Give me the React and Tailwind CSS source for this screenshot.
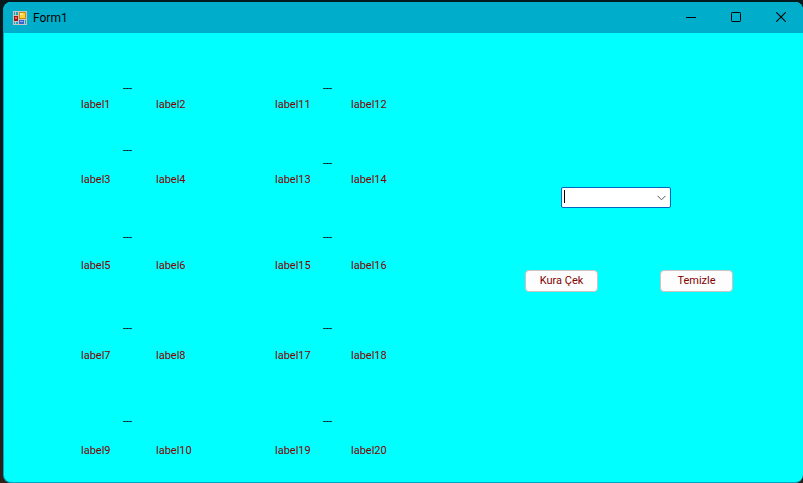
import React from "react";

const rows = [
  { space: "pt-12", left: ["label1", "label2"], right: ["label11", "label12"], leftGap: "gap-0", rightGap: "gap-0" },
  { space: "pt-[30px]", left: ["label3", "label4"], right: ["label13", "label14"], leftGap: "gap-[13px]", rightGap: "gap-0" },
  { space: "pt-[42px]", left: ["label5", "label6"], right: ["label15", "label16"], leftGap: "gap-3", rightGap: "gap-3" },
  { space: "pt-[47px]", left: ["label7", "label8"], right: ["label17", "label18"], leftGap: "gap-[11px]", rightGap: "gap-[11px]" },
  { space: "pt-[50px]", left: ["label9", "label10"], right: ["label19", "label20"], leftGap: "gap-[13px]", rightGap: "gap-[13px]" },
];

function Pair({ names, gap, width, inset }) {
  return (
    <div className={`flex flex-col ${gap} ${width}`}>
      <span className={`${inset} text-black`}>---</span>
      <div className="flex justify-between">
        <span>{names[0]}</span>
        <span className="w-[35px]">{names[1]}</span>
      </div>
    </div>
  );
}

function FormIcon() {
  return (
    <svg width="14" height="14" viewBox="0 0 14 14" shapeRendering="crispEdges" aria-hidden="true">
      <rect width="14" height="14" fill="#c9c4bd" />
      <rect x="1" y="1" width="1" height="3" fill="#18a4bd" />
      <rect x="3" y="1" width="2" height="3" fill="#18a4bd" />
      <rect x="1" y="5" width="4" height="5" fill="#a31515" />
      <rect x="2" y="6" width="2" height="2" fill="#e8695c" />
      <rect x="6" y="1" width="7" height="7" fill="#c88a10" />
      <rect x="7" y="2" width="5" height="5" fill="#ffd23c" />
      <rect x="7" y="2" width="3" height="2" fill="#ffe98a" />
      <rect x="1" y="11" width="1" height="2" fill="#18a4bd" />
      <rect x="3" y="11" width="2" height="2" fill="#18a4bd" />
      <rect x="6" y="9" width="5" height="4" fill="#3565d0" />
      <rect x="7" y="10" width="3" height="1" fill="#8db4ff" />
      <rect x="12" y="9" width="1" height="4" fill="#18a4bd" />
    </svg>
  );
}

const captionClass = "flex h-full w-[45px] items-center justify-center pb-px";

function TitleBar() {
  return (
    <header className="flex h-[31px] items-center bg-[#00aecb] pl-[9px] text-black">
      <FormIcon />
      <h1 className="ml-[6px] flex-1 text-[12px] leading-4">Form1</h1>
      <button type="button" aria-label="Minimize" className={captionClass}>
        <svg width="10" height="10" viewBox="0 0 10 10" shapeRendering="crispEdges"><path d="M0 5.5h10" stroke="currentColor" /></svg>
      </button>
      <button type="button" aria-label="Maximize" className={captionClass}>
        <svg width="10" height="10" viewBox="0 0 10 10"><rect x=".5" y=".5" width="9" height="9" rx=".8" fill="none" stroke="currentColor" /></svg>
      </button>
      <button type="button" aria-label="Close" className={captionClass}>
        <svg width="10" height="10" viewBox="0 0 10 10"><path d="M.3.3l9.4 9.4M9.7.3L.3 9.7" stroke="currentColor" strokeWidth="1.1" /></svg>
      </button>
    </header>
  );
}

const buttonClass = "h-[22px] w-[73px] rounded-[4px] border border-[#d0c0c0] bg-[#fdfdfd] leading-4";

export default function App() {
  return (
    <div className="min-h-screen bg-linear-to-b from-[#041a1e] via-[#15191b] to-[#30201a] pt-[2px] pl-[3px] font-['Roboto',sans-serif] text-[11px] leading-4 text-[#800000]">
      <div className="flex min-h-[481px] flex-col overflow-hidden rounded-lg border-b border-l border-[#00a5c0] bg-[#00ffff]">
        <TitleBar />
        <main className="flex flex-1 justify-between pr-[70px] pl-[77px]">
          <section>
            {rows.map((row) => (
              <div key={row.left[0]} className={`flex items-end gap-[84px] ${row.space}`}>
                <Pair names={row.left} gap={row.leftGap} width="w-[110px]" inset="pl-[42px]" />
                <Pair names={row.right} gap={row.rightGap} width="w-[111px]" inset="pl-[48px]" />
              </div>
            ))}
          </section>
          <form className="w-[208px] pt-[154px]" onSubmit={(e) => e.preventDefault()}>
            <div className="relative ml-9 w-[110px]">
              <select aria-label="Kura" className="block h-[21px] w-full appearance-none rounded-[2px] border border-[#0067c0] bg-white pl-1 text-black outline-none">
                <option value=""></option>
              </select>
              <span className="pointer-events-none absolute top-[3px] left-[3px] h-[13px] w-px bg-black" />
              <svg className="pointer-events-none absolute top-[8px] right-[5px]" width="9" height="6" viewBox="0 0 9 6" fill="none">
                <path d="M.5.8l4 4 4-4" stroke="#555" />
              </svg>
            </div>
            <div className="flex justify-between pt-[62px]">
              <button type="button" className={buttonClass}>Kura Çek</button>
              <button type="button" className={buttonClass}>Temizle</button>
            </div>
          </form>
        </main>
      </div>
    </div>
  );
}
